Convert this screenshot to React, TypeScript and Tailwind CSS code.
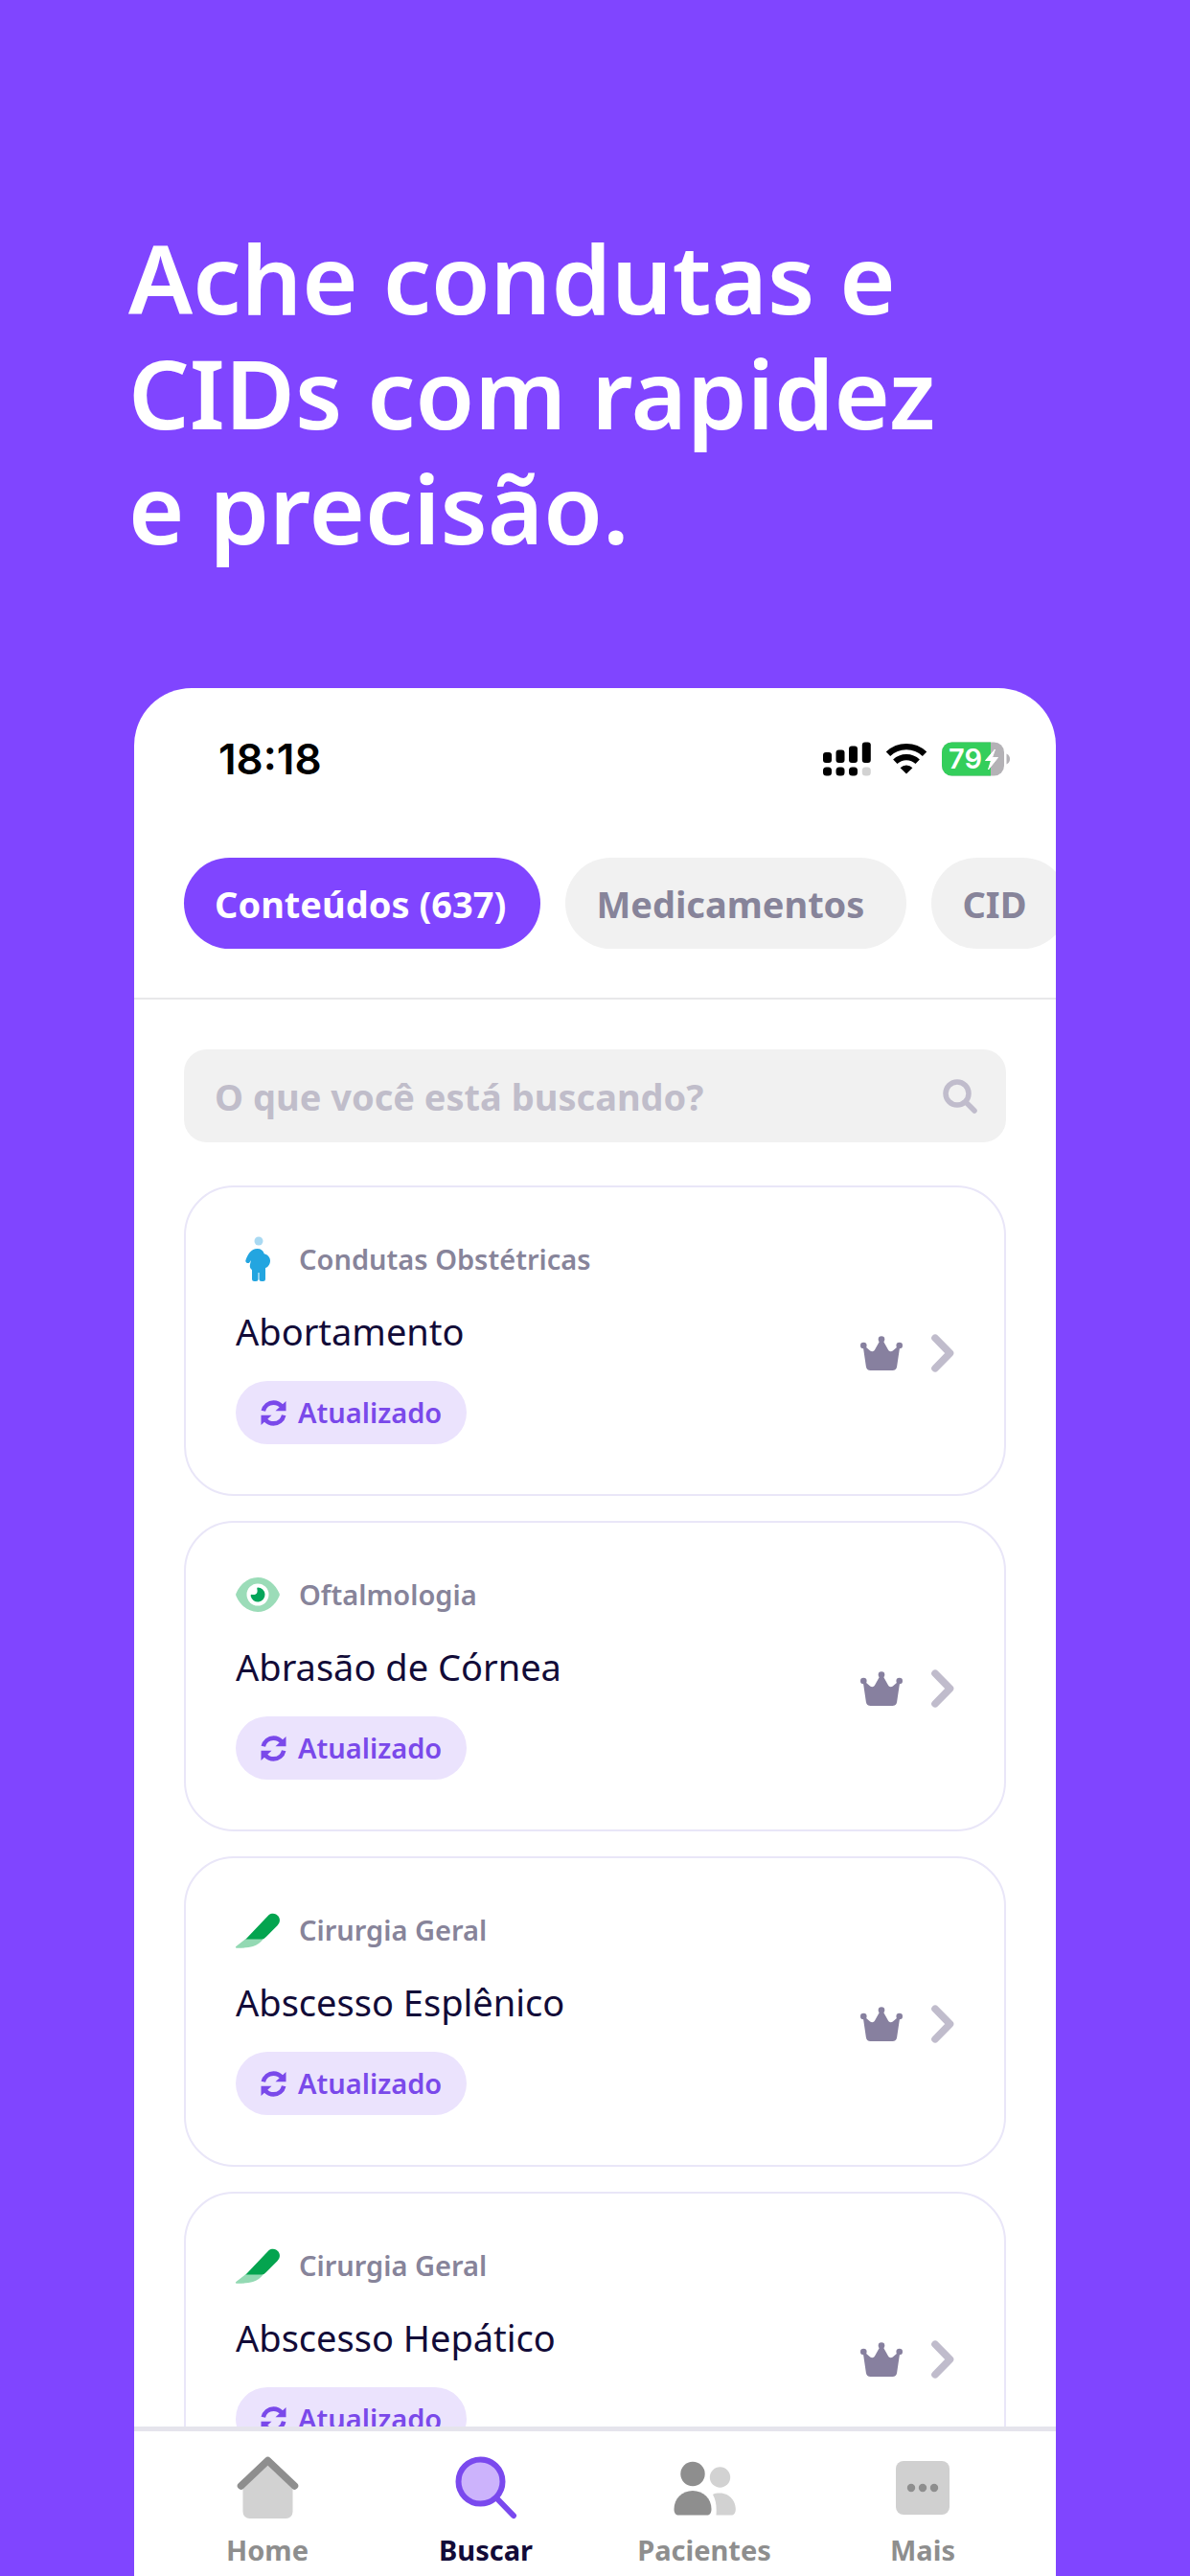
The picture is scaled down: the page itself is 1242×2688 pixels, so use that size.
import React, { useState } from "react";

type IconProps = { className?: string };

interface Content {
  title: string;
  category: string;
  icon: React.FC<IconProps>;
}

/* ---------- CATEGORY ICONS ---------- */

const PregnantIcon: React.FC<IconProps> = ({ className }) => (
  <svg viewBox="0 0 46 46" className={className} aria-hidden="true">
    <circle cx="24" cy="4" r="4.5" fill="#a9d9f2" />
    <path
      d="M22.5 12c4 0 6.300 2 7.200 5.200 3.800 1 6.300 3.900 6.300 7.300 0 4.200-2.600 6.900-5 7.500V43.500a2.500 2.500 0 0 1-2.500 2.500h-1.500a2.500 2.500 0 0 1-2.500-2.500V37h-1v6.500a2.500 2.500 0 0 1-2.500 2.500h-1.500a2.500 2.500 0 0 1-2.500-2.500V34c-1.800-1-2.600-3-2.100-5.200l1.100-4.800-1.500 2.200c-1.700 2.200-5.200 0-3.900-2.600C12.500 18 16 12 22.500 12z"
      fill="#23a5e0"
    />
  </svg>
);

const EyeIcon: React.FC<IconProps> = ({ className }) => (
  <svg viewBox="0 0 46 46" className={className} aria-hidden="true">
    <path
      d="M.4 21.800C4.500 12 12.800 5 23 5s18.500 7 22.600 16.800a3 3 0 0 1 0 2.400C41.500 34 33.200 41 23 41S4.500 34 .4 24.200a3 3 0 0 1 0-2.400z"
      fill="#9bdcb8"
    />
    <circle cx="23" cy="23" r="11.500" fill="#fff" />
    <path
      d="M23 15.500a7.500 7.500 0 1 1-7.300 9.100c-.3-1.200.5-2 1.600-1.700 3.400.9 5.900-1.700 5.200-5-.3-1.200-.4-2.400.5-2.400z"
      fill="#04a55a"
    />
  </svg>
);

const ScalpelIcon: React.FC<IconProps> = ({ className }) => (
  <svg viewBox="0 0 46 46" className={className} aria-hidden="true">
    <path d="M10.500 32H29c-3 4-6.500 6.500-11 8-4.500 1.300-10 1.800-17 1.800-1.200 0-1.500-1-.6-1.700z" fill="#93d9b3" />
    <path d="M34.500 7.200c3.500-2.600 7.800-1.700 10 1.300 2.300 3.200 1.800 6.900-1 9.700L31.800 30c-1.500 1.700-3 2.500-5 2.500H10.500z" fill="#04a44f" />
  </svg>
);

/* ---------- UI ICONS ---------- */

const CrownIcon: React.FC<IconProps> = ({ className }) => (
  <svg viewBox="0 0 44 36" className={className} aria-hidden="true">
    <g fill="#87809f">
      <circle cx="22" cy="3.500" r="3.300" />
      <circle cx="3.300" cy="10" r="3.300" />
      <circle cx="40.700" cy="10" r="3.300" />
      <path d="M20.300 5h3.400l5.300 9.500c1.100 1.900 3.100 2.200 4.800.9L39 11l2 1.500-2.900 19.400c-.4 2.600-2 4.100-4.600 4.100h-23c-2.600 0-4.200-1.500-4.600-4.100L3 12.500 5 11l5.200 4.400c1.700 1.300 3.700 1 4.800-.9z" />
    </g>
  </svg>
);

const ChevronIcon: React.FC<IconProps> = ({ className }) => (
  <svg viewBox="0 0 24 40" className={className} aria-hidden="true">
    <path
      d="M4 4.200 19.500 20 4 35.800"
      fill="none"
      stroke="#c0bccc"
      strokeWidth="7.600"
      strokeLinecap="round"
      strokeLinejoin="round"
    />
  </svg>
);

const SearchIcon: React.FC<IconProps> = ({ className }) => (
  <svg viewBox="0 0 36 36" className={className} aria-hidden="true">
    <g fill="none" stroke="#c0bccc" strokeWidth="5.500">
      <circle cx="15" cy="15" r="12" />
      <path d="M24 24l9 9" strokeLinecap="round" />
    </g>
  </svg>
);

const RefreshIcon: React.FC<IconProps> = ({ className }) => (
  <svg viewBox="0 0 27 27" className={className} aria-hidden="true">
    <g fill="none" stroke="#7a49ea" strokeWidth="4.600">
      <path d="M2.800 11.300C4 6 8.300 2.600 13.500 2.600c3.600 0 6.400 1.500 8.500 4" />
      <path d="M24.200 15.700C23 21 18.700 24.400 13.500 24.400c-3.600 0-6.400-1.500-8.500-4" />
    </g>
    <path d="M26.500 1v10.300H15.500zM.5 26V15.700h11z" fill="#7a49ea" />
  </svg>
);

/* ---------- STATUS ICONS ---------- */

const SignalIcon: React.FC<IconProps> = ({ className }) => (
  <svg viewBox="0 0 50 36" className={className} aria-hidden="true">
    <rect x="0" y="11" width="9" height="11" rx="3" />
    <rect x="13.500" y="8.500" width="9" height="13.500" rx="3" />
    <rect x="27" y="4.500" width="9" height="17.500" rx="3" />
    <rect x="40.800" y="0.500" width="9" height="21.500" rx="3" />
    <rect x="0" y="26.500" width="9" height="9" rx="3.500" />
    <rect x="13.500" y="26.500" width="9" height="9" rx="3.500" />
    <rect x="27" y="26.500" width="9" height="9" rx="3.500" />
    <rect x="40.800" y="26.500" width="9" height="9" rx="3.500" fill="#d2d2d2" />
  </svg>
);

const WifiIcon: React.FC<IconProps> = ({ className }) => (
  <svg viewBox="0 0 42 32" className={className} aria-hidden="true">
    <g fill="none" stroke="#000" strokeWidth="6.300">
      <path d="M2 10.800a27.500 27.500 0 0 1 38 0" />
      <path d="M9.300 18.800a17 17 0 0 1 23.400 0" />
    </g>
    <path d="M21 31.500 14.600 25.200a9.200 9.200 0 0 1 12.800 0z" />
  </svg>
);

const BatteryIcon: React.FC<IconProps> = ({ className }) => (
  <svg viewBox="0 0 72 36" className={className} aria-hidden="true">
    <clipPath id="battery-level">
      <rect width="51" height="36" />
    </clipPath>
    <rect y="0.500" width="65" height="35" rx="10.500" fill="#b4b2b6" />
    <rect y="0.500" width="65" height="35" rx="10.500" fill="#34ce5b" clipPath="url(#battery-level)" />
    <path d="M67.500 12.500c4.700 2 4.700 9 0 11z" fill="#b4b2b6" />
    <text x="7" y="28" fill="#fff" fontSize="29" fontWeight="600" fontFamily="Inter, sans-serif">
      79
    </text>
    <path d="M55.500 8 45.500 19.500h6L48.500 29l10-12.500h-6z" fill="#fff" stroke="#fff" strokeLinejoin="round" />
  </svg>
);

/* ---------- TAB BAR ICONS ---------- */

const HomeIcon: React.FC<IconProps> = ({ className }) => (
  <svg viewBox="0 0 66 66" className={className} aria-hidden="true">
    <path d="M33.500 9 59.500 32v26a7 7 0 0 1-7 7h-38a7 7 0 0 1-7-7V32z" fill="#d2d2d2" />
    <path
      d="M5.500 31 33.500 4.500 61.500 31"
      fill="none"
      stroke="#8e8e8e"
      strokeWidth="7.500"
      strokeLinecap="round"
      strokeLinejoin="round"
    />
  </svg>
);

const FindIcon: React.FC<IconProps> = ({ className }) => (
  <svg viewBox="0 0 66 66" className={className} aria-hidden="true">
    <g stroke="#7a49ee" strokeWidth="6">
      <path d="M46 45.500 62 62" strokeLinecap="round" />
      <circle cx="27.500" cy="26.500" r="23" fill="#ccb3fc" />
    </g>
  </svg>
);

const PatientsIcon: React.FC<IconProps> = ({ className }) => (
  <svg viewBox="0 0 66 66" className={className} aria-hidden="true">
    <g fill="#8e8e8e">
      <circle cx="21" cy="18.500" r="12.700" />
      <path d="M21 36c11 0 19.500 8.500 19.500 19 0 4-1.500 6.500-4.500 6.500H6c-3 0-4.500-2.500-4.500-6.500C1.500 44.500 10 36 21 36z" />
    </g>
    <g fill="#d2d2d2">
      <circle cx="49.500" cy="22" r="10.700" />
      <path d="M42 40c1.500-.9 4-1.400 7.500-1.400 9 0 16.300 7.400 16.300 16.400 0 4-1.500 6.500-4.500 6.500H45.500c.5-8.500 0-15.500-3.500-21.500z" />
    </g>
  </svg>
);

const MoreIcon: React.FC<IconProps> = ({ className }) => (
  <svg viewBox="0 0 66 66" className={className} aria-hidden="true">
    <rect x="5" y="5" width="56" height="56" rx="8" fill="#d0d0d0" />
    <g fill="#8e8e8e">
      <circle cx="21" cy="33" r="4.200" />
      <circle cx="33" cy="33" r="4.200" />
      <circle cx="45" cy="33" r="4.200" />
    </g>
  </svg>
);

/* ---------- DATA ---------- */

const CHIPS = ["Conteúdos (637)", "Medicamentos", "CID"];

const CONTENTS: Content[] = [
  { title: "Abortamento", category: "Condutas Obstétricas", icon: PregnantIcon },
  { title: "Abrasão de Córnea", category: "Oftalmologia", icon: EyeIcon },
  { title: "Abscesso Esplênico", category: "Cirurgia Geral", icon: ScalpelIcon },
  { title: "Abscesso Hepático", category: "Cirurgia Geral", icon: ScalpelIcon },
];

const TABS = [
  { label: "Home", icon: HomeIcon },
  { label: "Buscar", icon: FindIcon },
  { label: "Pacientes", icon: PatientsIcon },
  { label: "Mais", icon: MoreIcon },
];

const ContentCard: React.FC<{ content: Content }> = ({ content }) => {
  const Icon = content.icon;

  return (
    <a
      href="#"
      className="flex shrink-0 items-center justify-between rounded-[52px] border-2 border-[#e9e6f8] p-[52px]"
    >
      <div className="flex flex-col items-start">
        <div className="flex items-center gap-5">
          <Icon className="size-[46px] overflow-visible" />
          <span className="text-[29px] leading-10 font-semibold text-[#87849a]">
            {content.category}
          </span>
        </div>

        <h2 className="mt-[26px] text-[38px] leading-[52px] text-[#120b38]">
          {content.title}
        </h2>

        <span className="mt-[26px] flex items-center gap-3 rounded-full bg-[#ebe3fd] px-[26px] py-[13px] text-[29px] leading-10 font-semibold text-[#7a49ea]">
          <RefreshIcon className="size-[27px]" />
          Atualizado
        </span>
      </div>

      <div className="flex items-center gap-[30px] pt-[26px]">
        <CrownIcon className="h-9 w-11" />
        <ChevronIcon className="h-10 w-6" />
      </div>
    </a>
  );
};

export default function App() {
  const [chip, setChip] = useState(CHIPS[0]);
  const [tab, setTab] = useState("Buscar");

  return (
    <main className="flex h-screen flex-col overflow-hidden bg-[#8045ff] px-[140px] pt-[229px] font-['Noto_Sans',sans-serif]">
      <h1 className="-mx-[6px] text-[100px] leading-[120px] font-semibold text-white">
        Ache condutas e<br />
        CIDs com rapidez
        <br />e precisão.
      </h1>

      <section className="mt-[129px] flex min-h-0 flex-1 flex-col overflow-hidden rounded-t-[60px] bg-white">
        {/* STATUS BAR */}
        <div className="flex h-[102px] shrink-0 items-end justify-between pr-[47px] pl-[88px]">
          <span className="font-['Inter',sans-serif] text-[44px] leading-[56px] font-semibold text-black">
            18:18
          </span>
          <div className="flex h-14 items-center gap-4">
            <SignalIcon className="h-9 w-[50px]" />
            <WifiIcon className="h-8 w-[42px]" />
            <BatteryIcon className="h-9 w-[72px]" />
          </div>
        </div>

        {/* CHIPS */}
        <div className="flex shrink-0 gap-[26px] overflow-hidden border-b-2 border-[#e8e8ea] pt-[75px] pb-[51px] pl-[52px]">
          {CHIPS.map((c) => (
            <button
              key={c}
              onClick={() => setChip(c)}
              className={`h-[95px] shrink-0 rounded-full pl-8 text-[38px] leading-[52px] font-bold ${
                c === chip
                  ? "bg-[#8045ff] pr-9 text-white"
                  : "bg-[#f1f1f1] pr-11 text-[#87849a]"
              }`}
            >
              {c}
            </button>
          ))}
        </div>

        {/* LIST */}
        <div className="flex min-h-0 flex-1 flex-col overflow-hidden px-[52px] pt-[52px]">
          <label className="flex h-[97px] shrink-0 items-center rounded-3xl bg-[#f1f1f1] pr-[30px] pl-8">
            <input
              type="search"
              aria-label="O que você está buscando?"
              placeholder="O que você está buscando?"
              className="min-w-0 flex-1 bg-transparent text-[38px] leading-[52px] font-bold text-[#120b38] outline-none placeholder:text-[#c0bdca]"
            />
            <SearchIcon className="size-9" />
          </label>

          <div className="mt-[45px] flex flex-col gap-[26px]">
            {CONTENTS.map((content) => (
              <ContentCard key={content.title} content={content} />
            ))}
          </div>
        </div>

        {/* TAB BAR */}
        <nav className="grid shrink-0 grid-cols-4 border-t-[5px] border-[#e5e4ec] px-[25px] pt-[26px] pb-[7px]">
          {TABS.map(({ label, icon: Icon }) => (
            <a
              key={label}
              href="#"
              onClick={() => setTab(label)}
              className={`flex flex-col items-center gap-3 text-[29px] leading-10 font-bold ${
                label === tab ? "text-[#120b38]" : "text-[#8e8e8e]"
              }`}
            >
              <Icon className="size-[66px]" />
              {label}
            </a>
          ))}
        </nav>
      </section>
    </main>
  );
}
